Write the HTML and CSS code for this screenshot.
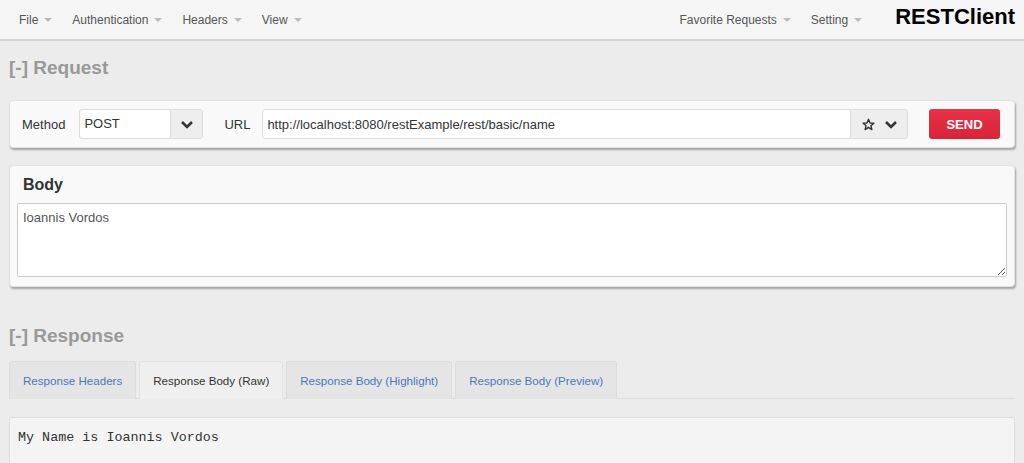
FILE: index.html
```html
<!DOCTYPE html>
<html lang="en">
<head>
    <meta charset="UTF-8">
    <title>RESTClient</title>
    <link rel="stylesheet" href="styles.css">
</head>
<body>
    <div class="navbar">
        <ul class="nav-menu">
            <li>File <span class="caret"></span></li>
            <li>Authentication <span class="caret"></span></li>
            <li>Headers <span class="caret"></span></li>
            <li>View <span class="caret"></span></li>
        </ul>
        <ul class="nav-menu nav-right">
            <li>Favorite Requests <span class="caret"></span></li>
            <li>Setting <span class="caret"></span></li>
        </ul>
        <div class="brand">RESTClient</div>
    </div>

    <div class="main">
        <h2 class="section-title">[-] Request</h2>

        <div class="panel request-bar">
            <span class="field-label">Method</span>
            <div class="select-box">
                <span class="select-value">POST</span>
                <span class="select-btn">
                    <svg width="12" height="9" viewBox="0 0 12 9"><path d="M1 2 L6 7 L11 2" fill="none" stroke="#333" stroke-width="2.6" stroke-linejoin="miter"/></svg>
                </span>
            </div>
            <span class="field-label url-label">URL</span>
            <div class="url-group">
                <input class="url-input" type="text" value="http://localhost:8080/restExample/rest/basic/name">
                <span class="url-btns">
                    <svg width="13" height="13" viewBox="0 0 24 24"><path d="M12 2.5 L14.8 9.2 L22 9.6 L16.4 14.2 L18.2 21.3 L12 17.3 L5.8 21.3 L7.6 14.2 L2 9.6 L9.2 9.2 Z" fill="none" stroke="#333" stroke-width="2.6" stroke-linejoin="round"/></svg>
                    <svg width="12" height="9" viewBox="0 0 12 9"><path d="M1 2 L6 7 L11 2" fill="none" stroke="#333" stroke-width="2.6"/></svg>
                </span>
            </div>
            <button class="send-btn">SEND</button>
        </div>

        <div class="panel body-panel">
            <div class="panel-title">Body</div>
            <textarea class="body-text">Ioannis Vordos</textarea>
        </div>

        <h2 class="section-title response-title">[-] Response</h2>

        <ul class="tabs">
            <li class="tab">Response Headers</li>
            <li class="tab active">Response Body (Raw)</li>
            <li class="tab">Response Body (Highlight)</li>
            <li class="tab">Response Body (Preview)</li>
        </ul>

        <pre class="response-body">My Name is Ioannis Vordos</pre>
    </div>
</body>
</html>
```

FILE: styles.css
```css
html,
body {
    height: 463px;
    overflow: hidden;
}

body {
    margin: 0;
    background: #ececec;
    font-family: "Liberation Sans", Arial, sans-serif;
    color: #333;
}

ul {
    list-style: none;
    margin: 0;
    padding: 0;
}

.navbar {
    height: 39px;
    display: flex;
    align-items: center;
    padding: 0 9px;
    background: #f5f5f5;
    border-bottom: 2px solid #d3d3d3;
}

.nav-menu {
    display: flex;
}

.nav-menu li {
    padding: 0 10px;
    font-size: 12px;
    color: #555;
    display: flex;
    align-items: center;
}

.nav-right {
    margin-left: auto;
}

.caret {
    display: inline-block;
    margin-left: 6px;
    width: 0;
    height: 0;
    border-left: 4px solid transparent;
    border-right: 4px solid transparent;
    border-top: 4px solid #bbb;
}

.brand {
    margin-left: 23px;
    font-size: 22px;
    font-weight: bold;
    color: #000;
    margin-top: -5px;
}

.main {
    padding: 0 9px;
}

.section-title {
    margin: 16px 0 21px;
    font-size: 19px;
    line-height: 22px;
    color: #999;
}

.response-title {
    margin: 38px 0 14px;
}

.panel {
    background: #f9f9f9;
    border: 1px solid #e2e2e2;
    border-radius: 4px;
    box-shadow: 1px 2px 2px rgba(0, 0, 0, 0.3);
}

.request-bar {
    display: flex;
    align-items: center;
    height: 30px;
    padding: 8px 14px 8px 12px;
    font-size: 13px;
}

.field-label {
    color: #333;
}

.select-box {
    display: flex;
    margin-left: 14px;
    width: 124px;
    height: 30px;
    box-sizing: border-box;
    border: 1px solid #ddd;
    border-radius: 3px;
    background: #fff;
}

.select-value {
    flex: 1;
    padding-left: 4px;
    line-height: 28px;
}

.select-btn,
.url-btns {
    display: flex;
    align-items: center;
    justify-content: center;
    background: #eeeeee;
    border-left: 1px solid #ddd;
}

.select-btn {
    width: 31px;
}

.url-label {
    margin-left: 21px;
}

.url-group {
    flex: 1;
    display: flex;
    margin-left: 12px;
    height: 30px;
    box-sizing: border-box;
    border: 1px solid #ddd;
    border-radius: 3px;
    background: #fff;
}

.url-input {
    flex: 1;
    border: none;
    outline: none;
    padding: 0 4px;
    font-family: "Liberation Sans", Arial, sans-serif;
    font-size: 13px;
    color: #333;
    background: transparent;
}

.url-btns {
    width: 56px;
    gap: 10px;
}

.send-btn {
    margin-left: 21px;
    width: 71px;
    height: 30px;
    border: none;
    border-radius: 3px;
    background: linear-gradient(#e63246, #d92437);
    color: #fff;
    font-family: "Liberation Sans", Arial, sans-serif;
    font-size: 13px;
    font-weight: bold;
}

.body-panel {
    margin-top: 17px;
    padding: 9px 7px 9px 7px;
}

.panel-title {
    font-size: 16px;
    font-weight: bold;
    line-height: 20px;
    padding-left: 6px;
    margin-bottom: 8px;
}

.body-text {
    display: block;
    box-sizing: border-box;
    width: 100%;
    height: 74px;
    border: 1px solid #ccc;
    border-radius: 2px;
    padding: 6px 5px 5px;
    font-family: "Liberation Sans", Arial, sans-serif;
    font-size: 13px;
    color: #555;
    background: #fff;
}

.tabs {
    display: flex;
    gap: 3px;
    border-bottom: 1px solid #dcdcdc;
}

.tab {
    height: 38px;
    line-height: 38px;
    padding: 0 13px;
    box-sizing: border-box;
    border: 1px solid #dcdcdc;
    border-bottom: none;
    border-radius: 3px 3px 0 0;
    background: #e5e5e5;
    font-size: 11.6px;
    color: #4a78bd;
    margin-bottom: -1px;
}

.tab.active {
    background: #efefef;
    color: #333;
    border-color: #e2e2e2;
    border-bottom: 1px solid #efefef;
}

.response-body {
    margin: 18px 0 0;
    height: 80px;
    padding: 12px 8px;
    background: #f4f4f4;
    border: 1px solid #dedede;
    border-radius: 3px;
    font-family: "Liberation Mono", "Courier New", monospace;
    font-size: 13.4px;
    color: #333;
}
```
